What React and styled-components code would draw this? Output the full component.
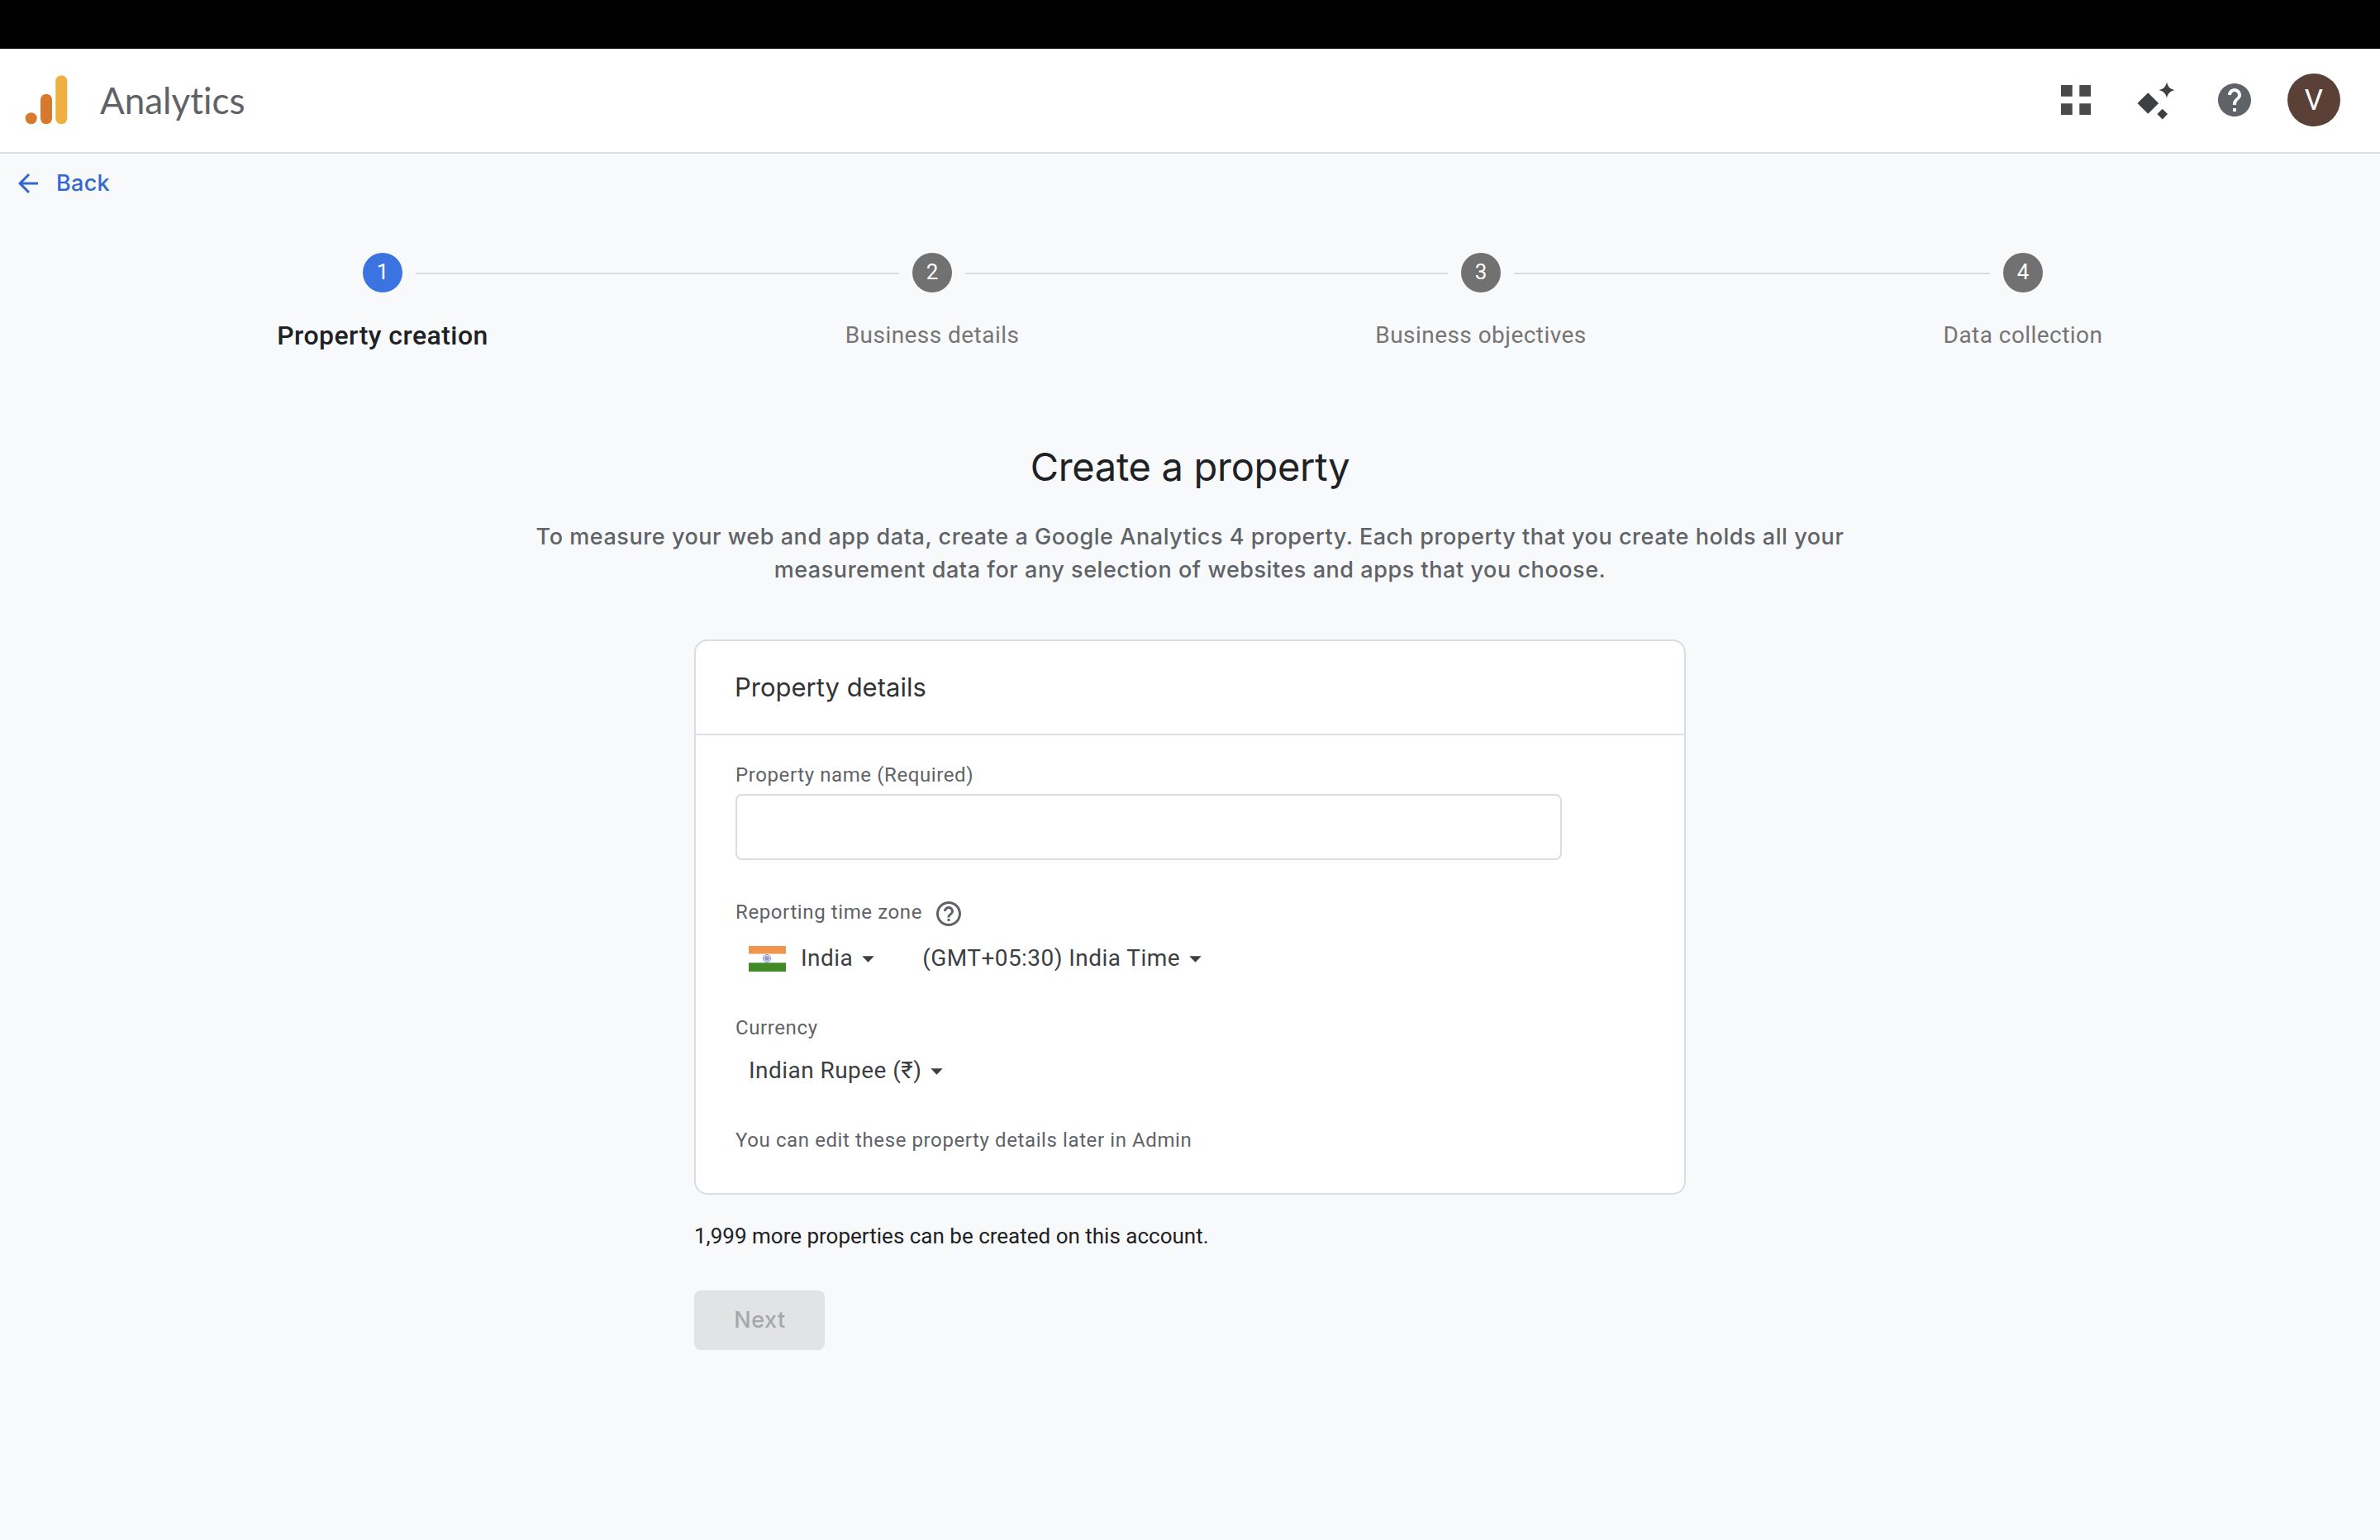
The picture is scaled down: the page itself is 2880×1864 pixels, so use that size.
import React, { useState } from 'react';
import styled, { createGlobalStyle } from 'styled-components';
import { MdArrowBack, MdHelp, MdHelpOutline } from 'react-icons/md';

const GlobalStyle = createGlobalStyle`
  * {
    box-sizing: border-box;
  }

  body {
    margin: 0;
    background: #f8f9fb;
    color: #202124;
    font-family: Roboto, sans-serif;
  }
`;

const Page = styled.div`
  min-height: 1864px;
  display: flex;
  flex-direction: column;
`;

const TopStrip = styled.div`
  height: 59px;
  background: #000;
`;

const Header = styled.header`
  height: 127px;
  padding: 0 48px 1px 30px;
  display: flex;
  align-items: center;
  background: #fff;
  border-bottom: 2px solid #dadce0;
`;

const ProductName = styled.span`
  margin-left: 39px;
  padding-bottom: 1px;
  font-family: Lato, sans-serif;
  font-size: 44px;
  line-height: 52px;
  font-variant-ligatures: none;
  color: #5f6368;
`;

const HeaderActions = styled.div`
  margin-left: auto;
  display: flex;
  align-items: center;
  gap: 48px;
`;

const IconButton = styled.button`
  width: 48px;
  height: 48px;
  padding: 0;
  border: 0;
  background: none;
  color: ${(p) => p.$color};
  display: flex;
  align-items: center;
  justify-content: center;
  cursor: pointer;
`;

const Avatar = styled.div`
  width: 64px;
  height: 64px;
  margin-left: -8px;
  border-radius: 50%;
  background: #5b4038;
  color: #fff;
  font-size: 35px;
  line-height: 66px;
  text-align: center;
`;

const BackLink = styled.a`
  height: 70px;
  padding-left: 16px;
  display: flex;
  align-items: center;
  gap: 16px;
  color: #3367d1;
  font-family: Inter, sans-serif;
  font-size: 27px;
  font-weight: 500;
  letter-spacing: 0.3px;

  svg {
    margin-top: 2px;
  }
`;

const Stepper = styled.div`
  margin: 50px 408px 0 439px;
  display: flex;
  align-items: flex-start;
`;

const Step = styled.div`
  width: 48px;
  display: flex;
  flex-direction: column;
  align-items: center;
`;

const StepCircle = styled.div`
  width: 48px;
  height: 48px;
  border-radius: 50%;
  background: ${(p) => (p.$active ? '#3b73e1' : '#717171')};
  color: #fff;
  font-size: 26px;
  line-height: 46px;
  text-align: center;
`;

const StepLabel = styled.div`
  margin-top: 32px;
  line-height: 40px;
  white-space: nowrap;
  font-size: ${(p) => (p.$active ? '32px' : '28px')};
  font-weight: ${(p) => (p.$active ? 500 : 400)};
  letter-spacing: 0.45px;
  color: ${(p) => (p.$active ? '#202124' : '#757575')};
`;

const Connector = styled.div`
  flex: ${(p) => p.$grow} 1 0;
  height: 2px;
  margin: 24px 16px 0;
  background: #dadce0;
`;

const Intro = styled.section`
  margin-top: 109px;
  text-align: center;
  font-family: Inter, sans-serif;
`;

const Title = styled.h1`
  margin: 0;
  font-size: 47px;
  font-weight: 400;
  line-height: 60px;
  letter-spacing: -0.3px;
`;

const Description = styled.p`
  width: 1600px;
  margin: 35px auto 0;
  font-size: 27px;
  font-weight: 500;
  line-height: 40px;
  letter-spacing: 0.55px;
  color: #5f6368;
`;

const Content = styled.main`
  width: 1200px;
  margin: 64px auto 0;
`;

const Card = styled.section`
  background: #fff;
  border: 2px solid #dadce0;
  border-radius: 16px;
`;

const CardHeader = styled.h2`
  height: 114px;
  margin: 0;
  padding-left: 47px;
  border-bottom: 2px solid #dedfe1;
  font-family: Inter, sans-serif;
  font-size: 31px;
  font-weight: 400;
  line-height: 112px;
  color: #333;
`;

const CardBody = styled.div`
  padding: 32px 48px 48px;
`;

const Label = styled.div`
  font-size: 24px;
  line-height: 32px;
  letter-spacing: 0.6px;
  color: #5f6368;
`;

const TextInput = styled.input`
  display: block;
  width: 1000px;
  height: 80px;
  margin: 7px 0 47px;
  padding: 0 24px;
  border: 2px solid #dadce0;
  border-radius: 8px;
  font: 28px Roboto, sans-serif;
  outline: none;
`;

const LabelRow = styled.div`
  height: 36px;
  display: flex;
  align-items: flex-start;
  gap: 14px;
  color: #5f6368;
`;

const SelectRow = styled.div`
  height: 48px;
  margin: 12px 0 44px;
  padding-left: 16px;
  display: flex;
  align-items: center;
  gap: 58px;
`;

const Select = styled.button`
  padding: 0;
  border: 0;
  background: none;
  display: flex;
  align-items: center;
  color: #3c4043;
  font-family: Roboto, sans-serif;
  font-size: 28px;
  line-height: 48px;
  letter-spacing: 0.45px;
  cursor: pointer;

  .flag {
    margin-right: 18px;
  }

  .caret {
    margin: 1px 0 0 11px;
  }
`;

const Quota = styled.p`
  margin: 34px 0 50px;
  font-size: 26px;
  line-height: 32px;
`;

const NextButton = styled.button`
  width: 158px;
  height: 72px;
  padding: 0 0 1px 1px;
  border: 0;
  border-radius: 8px;
  background: #e2e3e5;
  color: #a6a7a9;
  font-family: Inter, sans-serif;
  font-size: 27px;
  font-weight: 500;
  line-height: 70px;
  letter-spacing: 0.5px;
`;

const Logo = () => (
  <svg width="52" height="60" viewBox="0 0 52 60">
    <circle cx="7.7" cy="52.3" r="7" fill="#d77a2d" />
    <rect x="19" y="22.7" width="14" height="36.6" rx="7" fill="#d77a2d" />
    <rect x="37.3" y="0.3" width="14" height="59" rx="7" fill="#efb03f" />
  </svg>
);

const AppsIcon = () => (
  <svg width="36" height="36" viewBox="0 0 36 36" fill="currentColor">
    <path d="M0 0h13.7v13.7H0zM22.3 0H36v13.7H22.3zM0 22.3h13.7V36H0zM22.3 22.3H36V36H22.3z" />
  </svg>
);

const SparkIcon = () => (
  <svg width="48" height="48" viewBox="0 0 48 48" fill="currentColor">
    <path d="M15.3 15.2L28.1 28L15.3 40.8L2.5 28z" />
    <path d="M38 2.4C39.6 8.3 41.7 10.4 47.6 12C41.7 13.6 39.6 15.7 38 21.6C36.4 15.7 34.3 13.6 28.4 12C34.3 10.4 36.4 8.3 38 2.4z" />
    <path d="M32.7 34.8L39 41.1L32.7 47.4L26.4 41.1z" />
  </svg>
);

const IndiaFlag = () => (
  <svg className="flag" width="45" height="31" viewBox="0 0 45 31">
    <rect width="45" height="31" fill="#fff" />
    <rect width="45" height="9.5" fill="#f0954c" />
    <rect y="20.3" width="45" height="10.7" fill="#418a26" />
    <circle cx="22" cy="15" r="4.5" fill="#e3e5f4" stroke="#8088c8" strokeWidth="1" />
    <circle cx="22" cy="15" r="2.8" fill="#8d97d0" />
  </svg>
);

const Caret = () => (
  <svg className="caret" width="15" height="8" viewBox="0 0 15 8" fill="currentColor">
    <path d="M0.3 0.3h14.4L7.5 7.7z" />
  </svg>
);

const steps = ['Property creation', 'Business details', 'Business objectives', 'Data collection'];
const connectorWidths = [585, 584, 576];

const App = () => {
  const [name, setName] = useState('');

  return (
    <Page>
      <GlobalStyle />
      <TopStrip />
      <Header>
        <Logo />
        <ProductName>Analytics</ProductName>
        <HeaderActions>
          <IconButton $color="#4a4a4a" aria-label="Apps">
            <AppsIcon />
          </IconButton>
          <IconButton $color="#3c4043" aria-label="Insights">
            <SparkIcon />
          </IconButton>
          <IconButton $color="#5f6368" aria-label="Help">
            <MdHelp size={48} />
          </IconButton>
          <Avatar>V</Avatar>
        </HeaderActions>
      </Header>

      <BackLink>
        <MdArrowBack size={36} />
        Back
      </BackLink>

      <Stepper>
        {steps.map((label, i) => (
          <React.Fragment key={label}>
            <Step>
              <StepCircle $active={i === 0}>{i + 1}</StepCircle>
              <StepLabel $active={i === 0}>{label}</StepLabel>
            </Step>
            {i < steps.length - 1 && <Connector $grow={connectorWidths[i]} />}
          </React.Fragment>
        ))}
      </Stepper>

      <Intro>
        <Title>Create a property</Title>
        <Description>
          To measure your web and app data, create a Google Analytics 4 property. Each property that you create holds
          all your measurement data for any selection of websites and apps that you choose.
        </Description>
      </Intro>

      <Content>
        <Card>
          <CardHeader>Property details</CardHeader>
          <CardBody>
            <Label>Property name (Required)</Label>
            <TextInput value={name} onChange={(e) => setName(e.target.value)} />

            <LabelRow>
              <Label>Reporting time zone</Label>
              <MdHelpOutline size={36} />
            </LabelRow>
            <SelectRow>
              <Select>
                <IndiaFlag />
                India
                <Caret />
              </Select>
              <Select>
                (GMT+05:30) India Time
                <Caret />
              </Select>
            </SelectRow>

            <Label>Currency</Label>
            <SelectRow>
              <Select>
                Indian Rupee (₹)
                <Caret />
              </Select>
            </SelectRow>

            <Label>You can edit these property details later in Admin</Label>
          </CardBody>
        </Card>

        <Quota>1,999 more properties can be created on this account.</Quota>
        <NextButton disabled>Next</NextButton>
      </Content>
    </Page>
  );
};

export default App;
